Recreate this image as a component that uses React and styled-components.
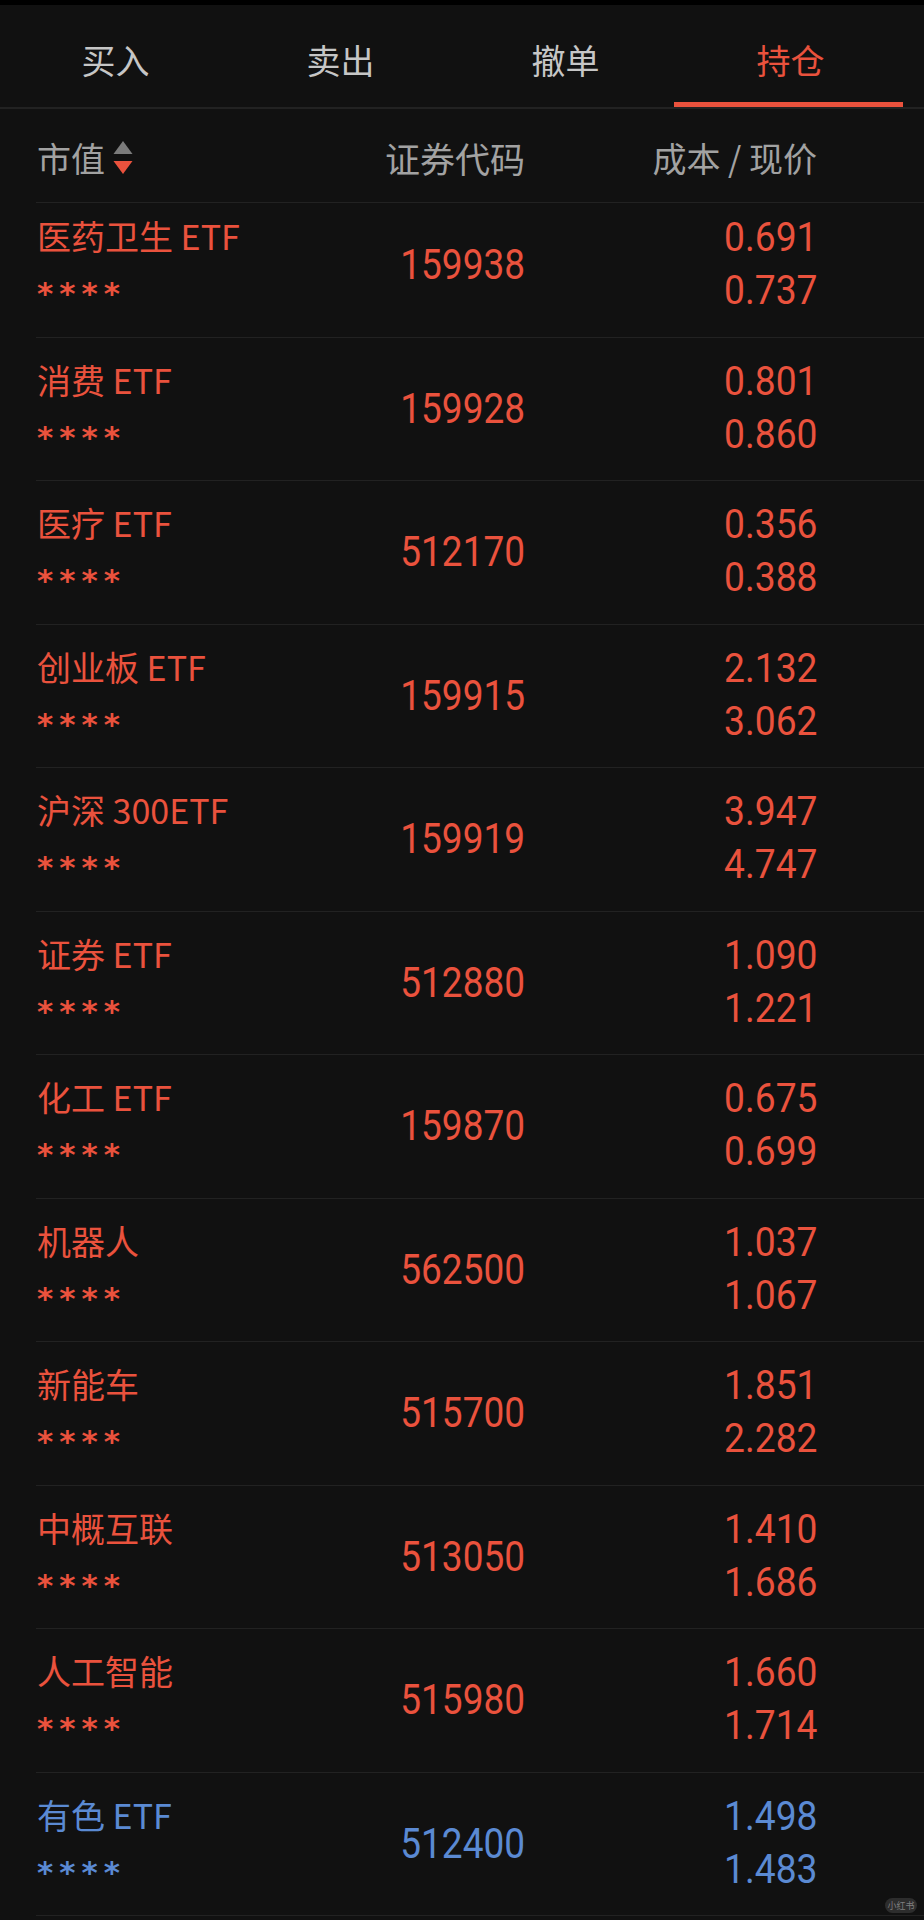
import React from "react";
import styled, { createGlobalStyle } from "styled-components";

const RED = "#ea523d";
const BLUE = "#5b8ad3";

const GlobalStyle = createGlobalStyle`
	html, body {
		margin: 0;
		padding: 0;
		background: #111111;
	}
	* {
		box-sizing: border-box;
	}
`;

const Page = styled.div`
	position: relative;
	width: 924px;
	height: 1920px;
	overflow: hidden;
	background: #111111;
	font-family: "Noto Sans CJK SC", "Noto Sans", sans-serif;
	display: flex;
	flex-direction: column;
`;

const StatusStrip = styled.div`
	height: 5px;
	background: #000;
	flex: none;
`;

const TabBar = styled.div`
	display: flex;
	height: 104px;
	flex: none;
	padding: 0 21px 0 3px;
	border-bottom: 2px solid #222222;
`;

const Tab = styled.div`
	position: relative;
	flex: 1;
	display: flex;
	align-items: center;
	justify-content: center;
	padding-top: 6px;
	font-size: 34px;
	color: ${(p) => (p.$active ? RED : "#c6c6c6")};

	&::after {
		content: "";
		display: ${(p) => (p.$active ? "block" : "none")};
		position: absolute;
		left: -4px;
		right: 0;
		bottom: 0;
		height: 5px;
		background: ${RED};
	}
`;

const Columns = styled.div`
	display: grid;
	grid-template-columns: 288px 200px 292px;
	margin-left: 36px;
	padding-left: 1px;
	border-bottom: 1px solid #222222;
`;

const Header = styled(Columns)`
	height: 94px;
	flex: none;
	align-items: center;
	padding-top: 4px;
	font-size: 34px;
	color: #a2a2a2;
`;

const HeadCell = styled.div`
	display: flex;
	align-items: center;
	justify-content: ${(p) => (p.$right ? "flex-end" : "flex-start")};
	white-space: pre;
	font-size: ${(p) => (p.$wide ? 35 : 34)}px;
`;

const SortIcon = () => (
	<svg width="20" height="34" viewBox="0 0 20 34" style={{ marginLeft: 8 }}>
		<polygon points="10,0 19.5,13 0.5,13" fill="#7b7b7b" />
		<polygon points="0.5,20 19.5,20 10,33" fill={RED} />
	</svg>
);

const Viewport = styled.div`
	flex: 1;
	overflow: hidden;
`;

const List = styled.div`
	margin-top: -9px;
`;

const Row = styled(Columns)`
	height: 143.5px;
	color: ${(p) => (p.$down ? BLUE : RED)};
`;

const NameCell = styled.div`
	display: flex;
	flex-direction: column;
	padding-top: 22px;
	gap: 18px;
`;

const Name = styled.div`
	height: 40px;
	line-height: 40px;
	font-size: 34px;
	white-space: pre;
`;

const Stars = styled.div`
	height: 30px;
	line-height: 30px;
	padding-top: 4px;
	font-family: "DejaVu Sans", sans-serif;
	font-weight: bold;
	font-size: 31px;
	letter-spacing: 6px;
`;

const Num = styled.div`
	font-family: "Roboto", "Liberation Sans", sans-serif;
	font-size: ${(p) => p.$size}px;
	line-height: 40px;
	height: 40px;
	text-align: right;
	white-space: nowrap;
	transform: scaleX(${(p) => p.$squeeze});
	transform-origin: right center;
`;

const CodeCell = styled.div`
	display: flex;
	align-items: center;
	justify-content: flex-end;
	padding-bottom: 2px;
`;

const PriceCell = styled.div`
	display: flex;
	flex-direction: column;
	align-items: flex-end;
	padding-top: 24px;
	gap: 13px;
`;

const Watermark = styled.div`
	position: absolute;
	right: 7px;
	bottom: 7px;
	width: 32px;
	height: 15px;
	border-radius: 8px;
	background: rgba(70, 70, 70, 0.55);
	color: rgba(150, 150, 150, 0.8);
	font-size: 9px;
	line-height: 15px;
	text-align: center;
`;

const tabs = ["买入", "卖出", "撤单", "持仓"];

const holdings = [
	{ name: "医药卫生 ETF", code: "159938", cost: "0.691", price: "0.737" },
	{ name: "消费 ETF", code: "159928", cost: "0.801", price: "0.860" },
	{ name: "医疗 ETF", code: "512170", cost: "0.356", price: "0.388" },
	{ name: "创业板 ETF", code: "159915", cost: "2.132", price: "3.062" },
	{ name: "沪深 300ETF", code: "159919", cost: "3.947", price: "4.747" },
	{ name: "证券 ETF", code: "512880", cost: "1.090", price: "1.221" },
	{ name: "化工 ETF", code: "159870", cost: "0.675", price: "0.699" },
	{ name: "机器人", code: "562500", cost: "1.037", price: "1.067" },
	{ name: "新能车", code: "515700", cost: "1.851", price: "2.282" },
	{ name: "中概互联", code: "513050", cost: "1.410", price: "1.686" },
	{ name: "人工智能", code: "515980", cost: "1.660", price: "1.714" },
	{ name: "有色 ETF", code: "512400", cost: "1.498", price: "1.483" },
];

export default function App() {
	return (
		<>
			<GlobalStyle />
			<Page>
				<StatusStrip />
				<TabBar>
					{tabs.map((t, i) => (
						<Tab key={t} $active={i === 3}>
							{t}
						</Tab>
					))}
				</TabBar>
				<Header>
					<HeadCell>
						市值
						<SortIcon />
					</HeadCell>
					<HeadCell $right $wide>证券代码</HeadCell>
					<HeadCell $right>成本 / 现价</HeadCell>
				</Header>
				<Viewport>
					<List>
						{holdings.map((h) => {
							const down = parseFloat(h.price) < parseFloat(h.cost);
							return (
								<Row key={h.code} $down={down}>
									<NameCell>
										<Name>{h.name}</Name>
										<Stars>****</Stars>
									</NameCell>
									<CodeCell>
										<Num $size={43} $squeeze={0.86}>
											{h.code}
										</Num>
									</CodeCell>
									<PriceCell>
										<Num $size={40} $squeeze={0.93}>
											{h.cost}
										</Num>
										<Num $size={40} $squeeze={0.93}>
											{h.price}
										</Num>
									</PriceCell>
								</Row>
							);
						})}
					</List>
				</Viewport>
				<Watermark>小红书</Watermark>
			</Page>
		</>
	);
}
